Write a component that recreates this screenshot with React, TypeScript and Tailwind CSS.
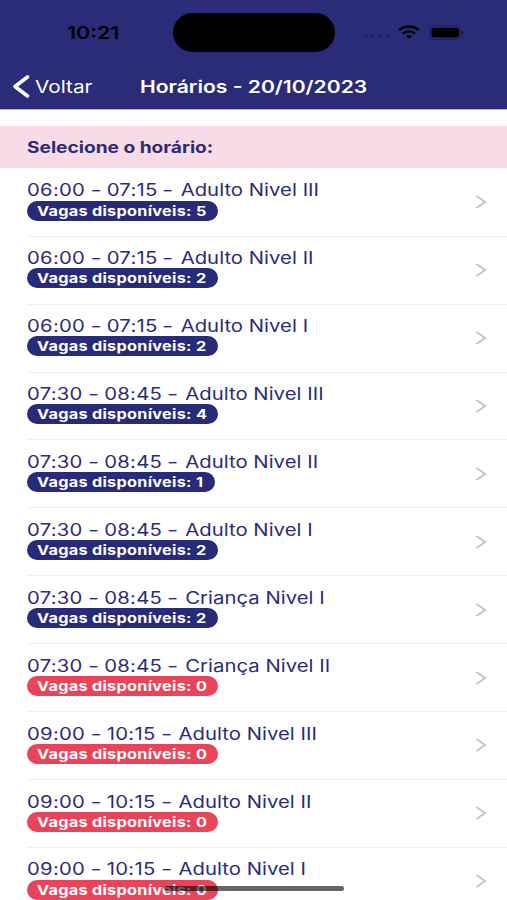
interface Slot {
  start: string;
  end: string;
  level: string;
  spots: number;
}

const slots: Slot[] = [
  { start: '06:00', end: '07:15', level: 'Adulto Nivel III', spots: 5 },
  { start: '06:00', end: '07:15', level: 'Adulto Nivel II', spots: 2 },
  { start: '06:00', end: '07:15', level: 'Adulto Nivel I', spots: 2 },
  { start: '07:30', end: '08:45', level: 'Adulto Nivel III', spots: 4 },
  { start: '07:30', end: '08:45', level: 'Adulto Nivel II', spots: 1 },
  { start: '07:30', end: '08:45', level: 'Adulto Nivel I', spots: 2 },
  { start: '07:30', end: '08:45', level: 'Criança Nivel I', spots: 2 },
  { start: '07:30', end: '08:45', level: 'Criança Nivel II', spots: 0 },
  { start: '09:00', end: '10:15', level: 'Adulto Nivel III', spots: 0 },
  { start: '09:00', end: '10:15', level: 'Adulto Nivel II', spots: 0 },
  { start: '09:00', end: '10:15', level: 'Adulto Nivel I', spots: 0 },
];

function StatusBar() {
  return (
    <div className="flex h-[64px] items-center text-black">
      <div className="w-[173px] pl-[67px] pt-px">
        <span className="inline-block origin-left scale-x-[1.26] text-[17px] font-semibold leading-[20px]">10:21</span>
      </div>
      <div className="h-[39px] w-[162px] rounded-full bg-black" />
      <div className="ml-[29px] mt-[9px] flex gap-[3px] opacity-20">
        {[0, 1, 2, 3].map((dot) => (
          <div key={dot} className="h-[3px] w-[4px] rounded-full bg-black" />
        ))}
      </div>
      <svg className="ml-[9px] h-[14px] w-[22px]" viewBox="0 0 22 14" fill="none" stroke="currentColor">
        <path d="M1.2 5.1C6.8 0.3 15.2 0.3 20.8 5.1" strokeWidth="2.5" />
        <path d="M4.9 8.6C8.4 5.6 13.6 5.6 17.1 8.6" strokeWidth="2.4" />
        <path d="M11 13.4L7.8 11C9.6 9.5 12.4 9.5 14.2 11Z" fill="currentColor" stroke="none" />
      </svg>
      <svg className="ml-[9px] h-[15px] w-[36px]" viewBox="0 0 36 15">
        <rect x="0.7" y="0.7" width="31" height="13.6" rx="4.5" fill="none" stroke="#000" strokeOpacity="0.3" />
        <rect x="2.4" y="2.8" width="27.6" height="9.6" rx="3.2" fill="#000" />
        <path d="M33 5.4C35.2 6.1 35.2 8.9 33 9.6Z" fill="#000" fillOpacity="0.4" />
      </svg>
    </div>
  );
}

function NavBar() {
  return (
    <div className="flex h-[45px] items-center text-white">
      <svg className="ml-[12px] h-[23px] w-[18px]" viewBox="0 0 18 23" fill="none" stroke="currentColor">
        <path d="M15.5 2L3 11.5L15.5 21" strokeWidth="3.6" strokeLinecap="round" strokeLinejoin="round" />
      </svg>
      <button className="ml-[5px] w-[105px] pt-[2px] text-left">
        <span className="inline-block origin-left scale-x-[1.22] text-[17px]">Voltar</span>
      </button>
      <h1 className="origin-left scale-x-[1.24] whitespace-nowrap pt-[2px] text-[17px] font-semibold">
        Horários - 20/10/2023
      </h1>
    </div>
  );
}

function SlotRow({ slot }: { slot: Slot }) {
  return (
    <li className="flex h-[67.9px] shrink-0 pl-[27px]">
      <div className="flex flex-1 items-center border-b border-[#f0f0f2]">
        <div className="flex h-full flex-1 flex-col items-start pt-[11.6px]">
          <span className="origin-left scale-x-[1.215] whitespace-nowrap text-[16.7px] leading-[21px]">
            <span className="tracking-[0.22px]">
              {slot.start} <span className="inline-block scale-x-[1.2]">-</span> {slot.end}{' '}
              <span className="inline-block scale-x-[1.2]">-</span>{' '}
            </span>
            <span className="ml-[1.2px] tracking-[0.03px]">{slot.level}</span>
          </span>
          <div
            className={`-mt-[0.9px] flex h-[20px] items-center rounded-full pl-[10px] text-white ${
              slot.spots === 1 ? 'w-[188px]' : 'w-[191px]'
            } ${slot.spots > 0 ? 'bg-[#282b77]' : 'bg-[#ea445a]'}`}
          >
            <span className="origin-left scale-x-[1.25] whitespace-nowrap text-[13px] font-bold leading-[20px] tracking-[0.22px]">
              Vagas disponíveis: {slot.spots}
            </span>
          </div>
        </div>
        <svg className="mr-[20px] h-[14px] w-[12px]" viewBox="0 0 12 14" fill="none">
          <path d="M1.5 1L10 7L1.5 13" stroke="#c5c5ca" strokeWidth="2" />
        </svg>
      </div>
    </li>
  );
}

export default function App() {
  return (
    <main className="relative flex h-[900px] w-[507px] flex-col overflow-hidden bg-white font-['Inter',sans-serif] text-[#2b2c79]">
      <header className="h-[110px] shrink-0 border-b border-[#b9b9dc] bg-[#2a2c79]">
        <StatusBar />
        <NavBar />
      </header>

      <div className="mt-[16.4px] flex h-[42px] shrink-0 items-center bg-[#f8dbe6] pl-[27px]">
        <h2 className="origin-left scale-x-[1.195] whitespace-nowrap text-[16px] font-bold">Selecione o horário:</h2>
      </div>

      <ul className="mt-[0.5px] flex flex-col">
        {slots.map((slot) => (
          <SlotRow key={`${slot.start}-${slot.level}`} slot={slot} />
        ))}
      </ul>

      <div className="absolute bottom-[9px] left-[164px] h-[5px] w-[180px] rounded-full bg-black/60" />
    </main>
  );
}
